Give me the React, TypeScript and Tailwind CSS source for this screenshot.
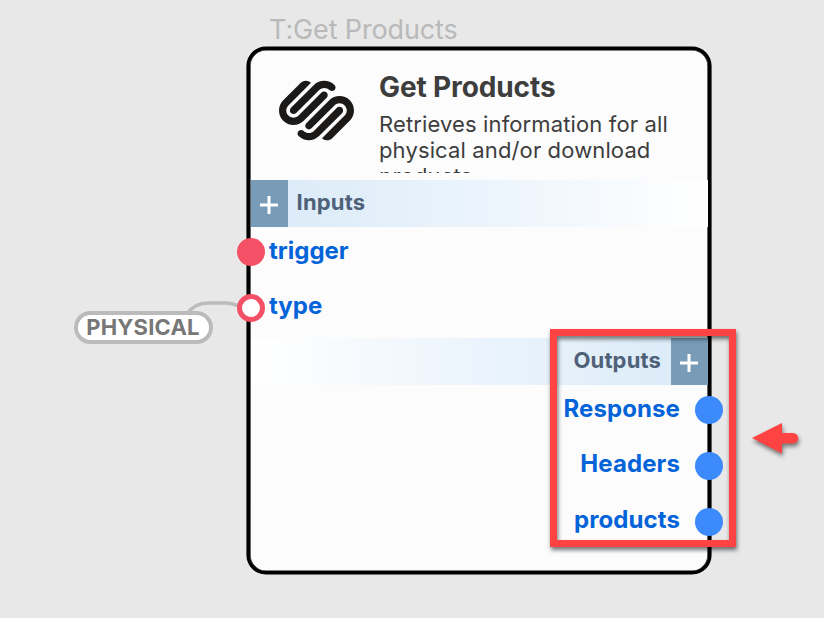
import { SiSquarespace } from "react-icons/si";

function Plus() {
  return (
    <div className="flex h-full w-[37px] shrink-0 items-center justify-center bg-[#789bb7] pt-[3px] pr-[2px]">
      <svg width="18" height="18" viewBox="0 0 18 18" stroke="#fff" strokeWidth="3">
        <path d="M9 0v18M0 9h18" />
      </svg>
    </div>
  );
}

function InputPort({ name, open }: { name: string; open?: boolean }) {
  return (
    <div className="-ml-[13px] flex h-[56px] items-center gap-[4px]">
      <span
        className={
          open
            ? "size-7 shrink-0 rounded-full border-[5.5px] border-[#f55166] bg-white"
            : "size-7 shrink-0 rounded-full bg-[#f55166]"
        }
      />
      <span className={open ? "-mt-[5px] text-[24px] leading-7 font-bold text-[#0363d9]" : "-mt-[3px] text-[24px] leading-7 font-bold text-[#0363d9]"}>
        {name}
      </span>
    </div>
  );
}

function OutputPort({ name, raised }: { name: string; raised?: boolean }) {
  return (
    <div className="-mr-[15px] flex h-[56px] items-center justify-end gap-[15px]">
      <span
        className={
          raised
            ? "-mt-[5px] text-[24px] leading-7 font-bold tracking-[0.1px] text-[#0363d9]"
            : "-mt-[3px] text-[24px] leading-7 font-bold tracking-[0.1px] text-[#0363d9]"
        }
      >
        {name}
      </span>
      <span className="size-7 shrink-0 rounded-full bg-[#3c8afb]" />
    </div>
  );
}

function Node() {
  return (
    <section className="absolute top-[47px] left-[247px] flex h-[527px] w-[464px] flex-col rounded-[19px] border-[3px] border-black bg-[#fcfcfc] shadow-[0_0_0_0.6px_#000,inset_0_0_0_0.6px_#000]">
      <header className="flex h-[130px] shrink-0">
        <SiSquarespace size={75} className="mt-[23px] ml-[29px] shrink-0 text-[#1b1a18]" />
        <div className="ml-[25px] h-[123px] overflow-hidden text-[#3d3d3d]">
          <h2 className="mt-[20px] text-[28px] leading-[34px] font-bold tracking-[-0.12px] whitespace-nowrap">
            Get Products
          </h2>
          <p className="mt-[7px] w-[310px] text-[22px] leading-[26px] tracking-[0.13px]">
            Retrieves information for all physical and/or download products
          </p>
        </div>
      </header>
      <div className="ml-px flex h-[47px] shrink-0 items-center bg-linear-to-r from-[#d9eaf7] via-[#ebf4fc] to-white">
        <Plus />
        <span className="-mt-[3px] ml-[8.5px] text-[22px] leading-7 font-bold tracking-[0.2px] text-[#4f6179]">Inputs</span>
      </div>
      <div className="h-[111px] shrink-0 -translate-y-[3px]">
        <InputPort name="trigger" />
        <InputPort name="type" open />
      </div>
      <div className="ml-px flex h-[47px] shrink-0 items-center justify-end bg-linear-to-l from-[#d9eaf7] via-[#ebf4fc] to-white">
        <span className="-mt-[3px] mr-[10px] text-[22px] leading-7 font-bold tracking-[0.15px] text-[#4f6179]">Outputs</span>
        <Plus />
      </div>
      <div className="-mt-[3px]">
        <OutputPort name="Response" />
        <OutputPort name="Headers" raised />
        <OutputPort name="products" raised />
      </div>
    </section>
  );
}

export default function App() {
  return (
    <main className="relative h-[618px] w-[824px] overflow-hidden bg-[#e8e8e8] font-['Inter',sans-serif]">
      <div className="absolute top-[13px] left-[269px] text-[27px] leading-[34px] tracking-[-0.13px] whitespace-nowrap text-[#b9b9b9]">
        T:Get Products
      </div>
      <svg className="absolute top-[295px] left-[180px]" width="70" height="24" fill="none" stroke="#bbb" strokeWidth="3.5">
        <path d="M7 19C13 10 20 8 28 8H46C54 8 56 10 61 12" />
      </svg>
      <div className="absolute top-[311px] left-[74px] flex h-[33px] w-[139px] items-center justify-center rounded-full border-4 border-[#bbb] bg-white pr-px pb-px text-[22px] leading-6 font-bold tracking-[0.2px] text-[#777]">
        PHYSICAL
      </div>
      <Node />
      <div className="absolute top-[329px] left-[550px] h-[218px] w-[186px] border-[7px] border-[#ff4242] drop-shadow-[1px_3px_2px_rgba(0,0,0,0.55)]" />
      <svg className="absolute top-[415px] left-[744px] drop-shadow-[1px_3px_2px_rgba(0,0,0,0.5)]" width="60" height="48" fill="#ff4242">
        <path d="M8 23L38 8V18H49A5.2 5.2 0 0 1 49 28.5H38V38.5Z" />
      </svg>
    </main>
  );
}
